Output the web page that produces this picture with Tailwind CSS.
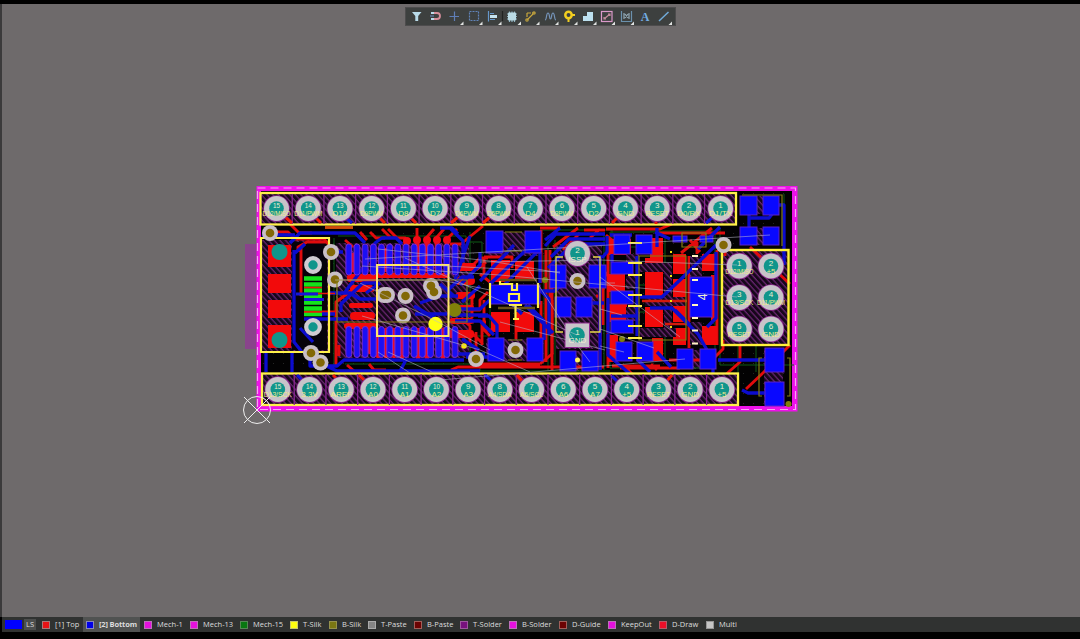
<!DOCTYPE html>
<html lang="en">
<head>
<meta charset="utf-8">
<title>PCB Editor</title>
<script src="https://cdn.jsdelivr.net/npm/@tailwindcss/browser@4"></script>
</head>
<body class="w-[1080px] h-[639px] overflow-hidden bg-black font-['Open_Sans','Noto_Sans',sans-serif]">
<div class="flex flex-col h-full">
<div class="h-1 shrink-0 bg-black"></div>
<main class="relative h-[613px] shrink-0 bg-[#6e6a6b] border-l-2 border-[#3b3a3b]">
<svg class="block -ml-0.5 w-[1080px] h-[613px]" viewBox="0 4 1080 613" fill="none">
<defs>
<pattern id="hatch" width="4.200" height="4.200" patternUnits="userSpaceOnUse" patternTransform="rotate(-42)"><rect width="5" height="5" fill="#16071a"/><path d="M1 0V5" stroke="#76297e" stroke-width="1.100"/></pattern>
<pattern id="dots" width="10" height="10" patternUnits="userSpaceOnUse"><rect x="3" y="3" width="1" height="1" fill="#252525"/></pattern>
<g id="via"><circle r="8" fill="#c8bfc6"/><circle r="4.300" fill="#826806"/></g>
<g id="pad"><circle r="13.300" fill="#8d288e"/><circle r="12.500" fill="#c8c4c9"/><circle r="7.300" fill="#10958b"/></g>
<g id="pin"><rect x="-2.900" width="5.800" height="31" rx="2.900" fill="#1b10f4" stroke="#7a2ad0" stroke-width="1"/></g>
</defs>
<rect x="245" y="244" width="15" height="105" fill="#89448b"/>
<rect x="256.500" y="186" width="541" height="225.500" fill="#ed12e8"/>
<rect x="261" y="191" width="531" height="215" fill="#030203"/>
<rect x="261" y="191" width="531" height="215" fill="url(#dots)"/>
<rect x="257.500" y="188" width="538" height="221.500" stroke="#f7a6f2" stroke-width="1.200" stroke-dasharray="8 5"/>

<!-- copper pour -->
<g fill="url(#hatch)">
<rect x="262" y="240" width="66" height="111"/><rect x="336" y="243" width="133" height="115"/><rect x="488" y="232" width="54" height="24"/><rect x="556" y="244" width="46" height="105"/><rect x="486" y="339" width="56" height="22"/><rect x="722" y="250" width="67" height="95"/><rect x="764" y="348" width="19" height="57"/><rect x="749" y="196" width="22" height="18"/><rect x="749" y="228" width="22" height="17"/><rect x="677" y="350" width="39" height="19"/><rect x="560" y="351" width="38" height="20"/>
</g>
<rect x="292" y="242" width="35" height="108" fill="#06020a"/>

<!-- green outlines -->
<g stroke="#0f5a16" stroke-width="1">
<path d="M338 236H466V242H482V270M470 232V336H488M540 230H612V247H650M555 240V365M604 232V370M720 228V365H794M738 345V373M784 194V248M345 364H480V371H610M650 231H718M456 246V280M334 238V366M490 275V330M544 255V340M610 232H715V368H610ZM458 304H470V360M548 235V370M756 346V372M757 202V210M607 285H645M607 312H645M665 235V360"/>
</g>

<!-- top layer traces -->
<g stroke="#e00b0d" stroke-width="2.900" stroke-linejoin="round">
<path d="M274 232H288L295 239H324L331 247M290 224L299 233H312M345 240L353 247M382 229L390 237M370 232L376 238H385M388 229L397 238H405V246M417 228V245M434 229L427 237V245M444 229L437 237V245M457 229L447 239V246M483 226L461 244H450M360 232L367 240"/>
<path d="M325 227.500H353" stroke="#d04c0c"/>
<path d="M298 252V247L307 242H326M301 245V296M304 312H336M336 366V302L352 290H374M347 365L354 371M369 364L374 370H386M339 345V356"/>
<path d="M455 266H472L480 258H488M476 270L486 262M480 274L490 282M466 310H480V300L488 292M458 335H474L482 343M450 320L463 320L470 326V345M540 364L552 354V300M480 364H540M451 370L458 367H604M484 258V278M516 318V339M484 330L490 336M486 322H482V345M484 257H512V268M484 300V330H491M472 296V318M476 332V352"/>
<path d="M541 230V283M541 301V350M546 250V362M550 250V300M555 283L552 286V370M553 247L578 228M563 250L580 233M604 288L600 293V370M596 296H603M606 229H660L672 224M608 272L603 278V325M608 238V368M606 235L612 240M540 228H560M584 230H605M590 238L600 229"/>
<path d="M681 253L712 228M690 240L700 252M659 233H725M697 242V254M669 360H712L723 349V340M750 247L790 284M790 345L775 360M746 389L766 370M740 345V362L715 384M660 366H612M620 368H680M626 368L632 374M651 364L657 370M725 256V240M689 256V348M717 250V345"/>
</g>
<g fill="#f20a0b">
<rect x="268" y="245" width="23" height="22"/><rect x="268" y="274" width="23" height="19"/><rect x="268" y="300" width="23" height="18"/><rect x="268" y="325" width="23" height="23"/>
<rect x="491" y="260" width="19" height="22"/><rect x="515" y="261" width="19" height="20"/><rect x="491" y="312" width="19" height="20"/><rect x="515" y="312" width="19" height="20"/>
<rect x="609" y="239" width="22" height="16"/><rect x="650" y="238" width="13" height="20"/><rect x="607" y="274" width="18" height="18"/><rect x="607" y="304" width="20" height="18"/><rect x="608" y="335" width="10" height="27"/><rect x="645" y="258" width="18" height="38"/><rect x="645" y="307" width="18" height="20"/><rect x="652" y="338" width="11" height="23"/><rect x="673" y="254" width="13" height="20"/><rect x="673" y="279" width="13" height="19"/><rect x="673" y="303" width="13" height="19"/><rect x="673" y="328" width="13" height="17"/><rect x="702" y="254" width="15" height="17"/><rect x="702" y="326" width="15" height="19"/><rect x="711" y="275" width="6" height="46"/>
<rect x="347" y="274" width="30" height="8" rx="3"/><rect x="350" y="285" width="23" height="7" rx="3"/><rect x="349" y="303" width="24" height="5" rx="2"/><rect x="350" y="312" width="25" height="8" rx="4"/><rect x="344" y="323" width="33" height="6" rx="3"/><rect x="452" y="263" width="24" height="8" rx="3"/><rect x="455" y="277" width="20" height="8" rx="4"/><rect x="456" y="292" width="19" height="7" rx="3"/><rect x="456" y="305" width="18" height="6" rx="3"/><rect x="450" y="318" width="24" height="6" rx="3"/><rect x="448" y="330" width="26" height="8" rx="3"/><rect x="377" y="273" width="72" height="5"/>
</g>
<g fill="url(#hatch)"><rect x="626" y="254" width="13" height="9"/><rect x="626" y="276" width="13" height="13"/><rect x="626" y="307" width="14" height="14"/><rect x="636" y="263" width="36" height="9"/><rect x="664" y="272" width="8" height="65"/><rect x="645" y="297" width="41" height="9"/><rect x="639" y="328" width="37" height="9"/><rect x="690" y="322" width="12" height="23"/><rect x="690" y="256" width="12" height="20"/></g>
<path d="M642 301H687M665 324H689" stroke="#d51a0c" stroke-width="2.500"/>
<g fill="#f20a15"><circle cx="407" cy="241" r="4"/><circle cx="417" cy="240" r="4"/><circle cx="427" cy="240" r="4"/><circle cx="437" cy="240" r="4"/><circle cx="447" cy="240" r="4"/></g>
<g stroke="#e90c24" stroke-width="4.500" stroke-linecap="round"><path d="M407 245V268M417 243V270M427 243V270M437 243V270M447 243V270M353 255V270M386 250V270M378 330V356M386 330V356M394 330V356M402 330V358M418 330V358M427 330V358M443 330V358M370 330V352"/></g>

<!-- bottom layer traces -->
<g stroke="#0c0ccf" stroke-width="3.300" stroke-linejoin="round">
<path d="M262 235H295M290 243L300 233H355L365 243M375 247V243L382 238H396L402 244M294 250V342L302 352M295 253L305 244M266 352V372M292 352V372M304 314H335M304 319H348M300 328L313 342M310 355V366H337L344 360H464M320 363L337 371H480M407 358L399 373M331 252H343"/>
<path d="M330 293H350L360 299H376M341 312V304L363 283H378M366 293L380 283M372 256L345 292M438 320L414 306M420 303L440 296H458M440 284L454 296M448 290L462 277H474M452 309H480L493 297M455 321H480L494 335M458 354H485M462 339L479 350M450 228L463 241V262M440 228H452L458 234M470 236L455 280M480 286L462 302M460 285L480 265V252M415 314H447M450 315H488M466 357H488"/>
<path d="M480 281L514 245M490 284L525 251M503 286L538 251M478 316H489L497 325V340M512 304L522 314M528 305L544 321V340M537 287L549 299V335M525 305L553 333M538 291H555L563 283M545 246L556 234H605M551 257L569 239H605M548 268L573 244H605M560 228L545 240M607 236V252L602 258M600 255V370M604 303H592M540 252V283"/>
<path d="M610 235H632M608 298V332H612M608 334V355L630 374M611 316H640M655 232L670 239M657 228V247M640 297H662L680 280L716 245M650 308H672L698 334L707 350M716 252L716 318L707 327M657 352L671 367M713 374V368L703 360M718 360H766M742 390L748 393H765M749 212V230M749 218H769L773 213M779 205H784V265M720 227L698 249M637 359L650 372M675 310L690 325M637 256V336M612 254V262"/>
</g>
<g id="pins"></g>
<g fill="#0908ff" stroke="#5c22c5" stroke-width="1">
<rect x="740" y="196" width="17" height="19"/><rect x="763" y="196" width="16" height="19"/><rect x="740" y="227" width="17" height="18"/><rect x="763" y="227" width="16" height="18"/>
<rect x="486" y="231" width="17" height="22"/><rect x="525" y="231" width="16" height="22"/><rect x="550" y="265" width="16" height="23"/><rect x="589" y="265" width="17" height="23"/><rect x="555" y="297" width="16" height="20"/><rect x="576" y="297" width="16" height="20"/><rect x="488" y="338" width="16" height="23"/><rect x="527" y="338" width="16" height="23"/><rect x="560" y="351" width="16" height="20"/><rect x="582" y="351" width="16" height="20"/>
<rect x="614" y="235" width="16" height="19"/><rect x="636" y="235" width="16" height="19"/><rect x="611" y="262" width="22" height="12"/><rect x="611" y="291" width="22" height="13"/><rect x="611" y="320" width="22" height="13"/><rect x="616" y="342" width="16" height="19"/><rect x="637" y="342" width="16" height="19"/>
<rect x="673" y="236" width="14" height="6"/><rect x="700" y="236" width="13" height="6"/><rect x="690" y="277" width="22" height="40"/><rect x="677" y="349" width="16" height="20"/><rect x="700" y="349" width="16" height="20"/><rect x="765" y="348" width="19" height="24"/><rect x="765" y="382" width="19" height="24"/><rect x="490" y="285" width="50" height="19"/>
</g>
<g stroke-width="4.500"><path d="M304 278.500H322M304 284.500H322M304 290.500H322M304 296.500H322M304 302.500H322M304 308.500H322M304 314H322" stroke="#14e31b"/><path d="M304 287.500H322M312 293.500H335M304 312H322" stroke="#ed1606" stroke-width="1.300"/><path d="M296 294H318M304 299.500H324" stroke="#1616da" stroke-width="3"/></g>

<!-- header strips -->
<g fill="url(#hatch)" stroke="#fff04a" stroke-width="2.300"><rect x="260.500" y="193" width="475.500" height="31.500"/><rect x="262" y="373.500" width="476" height="31.500"/></g>
<g id="cells" stroke="#8a2692" stroke-width="1.300"></g>
<g stroke="#ed190c" stroke-width="3"><path d="M285 217L292 223M315 217L321 223M379 217L385 223M410 217L416 223M458 217L451 223M490 217L483 223M618 217L612 223M656 220V224M333 375L339 381M359 375L365 381M517 375L523 382M672 375L666 382"/></g>
<g stroke="#1515d5" stroke-width="3"><path d="M345 217L352 223M297 375L303 381M485 375L493 382M612 376L618 382M713 217L706 223"/></g>
<rect x="722" y="250" width="66.500" height="95" stroke="#fff13a" stroke-width="2.400"/>
<path d="M261 238H329V352H261Z" stroke="#fff04a" stroke-width="2.200"/>

<g id="pads"></g>
<g fill="#10958b"><circle cx="279.500" cy="252" r="8"/><circle cx="279.500" cy="340" r="8"/></g>
<g fill="#10958b" stroke="#d0cbd1" stroke-width="4.200"><circle cx="313" cy="265" r="6.800"/><circle cx="313" cy="327" r="6.800"/></g>
<use href="#pad" x="577.500" y="253.500"/>
<rect x="565" y="323" width="24.500" height="24.500" fill="#c8c4c9" stroke="#8d288e"/><circle cx="577" cy="335" r="7.800" fill="#10958b"/>
<use href="#via" x="270" y="233"/><use href="#via" x="331" y="252"/><use href="#via" x="335" y="279.500"/><use href="#via" x="311" y="353"/><use href="#via" x="320.500" y="362.500"/><use href="#via" x="384" y="295"/><use href="#via" x="387" y="295"/><use href="#via" x="405.500" y="296"/><use href="#via" x="403" y="315.500"/>
<use href="#via" x="431" y="286"/><use href="#via" x="434" y="292"/><circle cx="384" cy="295" r="4.300" fill="#826806"/><circle cx="431" cy="286" r="4.300" fill="#826806"/>
<use href="#via" x="577.500" y="281"/><use href="#via" x="515.500" y="350"/><use href="#via" x="476" y="359"/><use href="#via" x="723.500" y="245"/>

<!-- silkscreen -->
<g stroke="#857e12" stroke-width="1.200"><path d="M337 280V322H467V280H337M505 232H522M505 251H522M639 256H686V340H639ZM682 233H706V247H682ZM762 358H759V396H762M787 358H790V396H787M508 340H522M508 360H522M742 195H782V246"/><path d="M500 280H537M498 308H535" stroke="#685018" stroke-width="2.500"/></g>
<circle cx="454.500" cy="310" r="7" fill="#81800a"/><circle cx="545" cy="280" r="3" fill="#81800a"/><circle cx="622" cy="339" r="3" fill="#81800a"/><circle cx="788.500" cy="404" r="3" fill="#81800a"/>
<path d="M377 265H448.500V336H377Z" stroke="#ffe66b" stroke-width="2"/>
<path d="M563 257H556V332H563M593 257H600V332H590" stroke="#e7d94b" stroke-width="1.300"/>
<g stroke="#ffee4a" stroke-width="2.200"><path d="M490 283V308M538 283V308M628 243H642M628 263H642M628 275H642M628 295H642M628 306H642M628 326H642M628 338H642M628 358H642"/><path d="M500 281V284H512V290H517V283M509 294V301H519V294ZM509 305H522M515.500 304V318M513 319H519"/></g>
<g stroke="#fff3c1" stroke-width="2"><path d="M692 256H698M692 269H698M692 280H698M692 305H698M692 318H698M692 330.500H698M692 343.500H698"/></g>
<circle cx="435.500" cy="324" r="7.200" fill="#ffff13"/><circle cx="464" cy="346" r="2.800" fill="#f5e50b"/><circle cx="577.500" cy="360" r="2.500" fill="#fff25e"/>
<g fill="#f1e60b"><rect x="670" y="251" width="2" height="2"/><rect x="670" y="275" width="2" height="2"/><rect x="670" y="300" width="2" height="2"/><rect x="670" y="326" width="2" height="2"/></g>

<!-- unrouted connections -->
<g stroke="#bcb9ce" stroke-width=".65" opacity=".85"><path d="M378 249L490 261L560 273M365 259L560 248L770 235M362 266L500 275L737 297M405 258L577 335M335 280H440L490 290M360 283L440 323L490 350M362 316L480 350L530 372M378 352L410 373M388 352L432 372H470M440 380L685 359M408 264L560 272M480 262L600 260L737 265M500 322L605 350M527 267L577 345L590 362M600 277L680 337M600 309L622 315M600 329L654 348M600 346L624 352M600 283H615"/></g>

<!-- designators -->
<g font-family="Liberation Sans, sans-serif" text-anchor="middle" fill="#eeeed0" font-size="8"><g id="labels"></g>
<text x="577.500" y="253">2</text><text x="577.500" y="262">ISSP</text><text x="577.500" y="335">1</text><text x="577.500" y="343">GND</text>
<text transform="translate(707 297) rotate(-90)" font-size="12">4</text></g>

<g stroke="#eeeeee" stroke-width="1"><circle cx="257" cy="410" r="13.500"/><path d="M244 397L270 423M270 397L244 423"/></g>
</svg>

<div class="absolute left-[403px] top-[3px] w-[271px] h-[19px] bg-[#3d403f] border border-[#4d4c4d]">
<svg class="block -ml-px -mt-px w-[271px] h-[19px]" viewBox="405 7 271 19" fill="none" stroke-width="1.200">
<path d="M412 12H421.500L418.200 16V21H415.300V16Z" fill="#b9dbea"/>
<path d="M434 13H437A3 3 0 0 1 437 19H434" stroke="#d68e9b" stroke-width="1.800"/><path d="M431 13H434M431 19H434" stroke="#b9dbea" stroke-width="2"/><path d="M430 16H434" stroke="#6581ac"/>
<path d="M454.500 11.500V21M449.500 16.500H459" stroke="#5f7eb7"/>
<rect x="469.500" y="11.500" width="9" height="9" stroke="#6183b9" stroke-dasharray="2 1"/>
<path d="M488.500 11V21.500M490 13.500H494M490 19.500H495" stroke="#6597ca"/><path d="M490 16.500H497" stroke="#c6e3ef" stroke-width="3"/>
<path d="M502.500 11V21" stroke="#202322"/>
<path d="M507 14H517M507 16.500H517M507 19H517M509.500 11.500V22M512 11.500V22M514.500 11.500V22" stroke="#8eb3c2"/><rect x="508" y="12.500" width="8" height="8" rx="1" fill="#bbdce6"/>
<path d="M527 20L533 14M527 13H531M532 13H535M527 17V13" stroke="#c9a83c"/><circle cx="527" cy="20" r="1.200" stroke="#bfa13e"/><circle cx="534" cy="13" r="1.200" stroke="#bfa13e"/>
<path d="M545 20C547 20 546 13 548 13C550 13 549 19 550.500 19C552 19 551 13 553 13C555 13 554 20 556 20" stroke="#7594b9"/>
<circle cx="568.500" cy="15" r="3.200" stroke="#f2ce20" stroke-width="2.500"/><path d="M568.500 18V22M571 15H575" stroke="#f2ce20" stroke-width="2"/>
<path d="M583 21V16H587V12H593V21Z" fill="#bde1f0"/>
<rect x="601.500" y="11.500" width="10.500" height="10" stroke="#db9aca"/><path d="M604 19L610 14M604 17V19H606M608 14H610V16" stroke="#c48c9d"/>
<path d="M621.500 11V21.500H631.500V11" stroke="#6b91ad"/><path d="M624 13V19M629 13V19M625 18L628 14M625 14L628 18" stroke="#91a8b5"/>
<text x="645" y="20.500" font-family="Liberation Serif, serif" font-weight="bold" font-size="12" text-anchor="middle" fill="#73aee3">A</text>
<path d="M659 21L668.500 12" stroke="#71abda" stroke-width="1.500"/>
<g fill="#e2e4e3"><path id="corner" d="M463.500 21.500V25H460Z"/><use href="#corner" x="19"/><use href="#corner" x="38"/><use href="#corner" x="57.500"/><use href="#corner" x="76"/><use href="#corner" x="95"/><use href="#corner" x="114"/><use href="#corner" x="133"/><use href="#corner" x="151.500"/><use href="#corner" x="170.500"/><use href="#corner" x="208.500"/></g>
</svg>
</div>
</main>

<footer class="ml-0.5 h-[15px] shrink-0 flex bg-[#303231] text-[7.5px] leading-[15px] text-[#dddddd] whitespace-nowrap">
<div class="w-[37px] flex items-center pl-[3px]"><i class="w-[17px] h-[9px] bg-[#0000ff]"></i><span class="ml-0.5 px-0.5 h-[11px] leading-[11px] bg-[#4c4e4d]">LS</span></div>
<div class="w-11 flex items-center pl-[3px]"><i class="size-[8px] bg-[#e81315] border border-[#aa7777]"></i><span class="ml-[5px]">[1] Top</span></div>
<div class="w-[57px] flex items-center pl-[3px] bg-[#505251] font-bold"><i class="size-[8px] bg-[#0000e8] border border-[#8788bb]"></i><span class="ml-[5px] tracking-[-0.15px]">[2] Bottom</span></div>
<div class="w-[46px] flex items-center pl-1"><i class="size-[8px] bg-[#e510de] border border-[#bd70ba]"></i><span class="ml-[5px]">Mech-1</span></div>
<div class="w-[50px] flex items-center pl-1"><i class="size-[8px] bg-[#e510de] border border-[#bd70ba]"></i><span class="ml-[5px]">Mech-13</span></div>
<div class="w-[50px] flex items-center pl-1"><i class="size-[8px] bg-[#087811] border border-[#558755]"></i><span class="ml-[5px]">Mech-15</span></div>
<div class="w-[39px] flex items-center pl-1"><i class="size-[8px] bg-[#ffff10] border border-[#c9c968]"></i><span class="ml-[5px]">T-Silk</span></div>
<div class="w-[39px] flex items-center pl-1"><i class="size-[8px] bg-[#7b7713] border border-[#96914c]"></i><span class="ml-[5px]">B-Silk</span></div>
<div class="w-[46px] flex items-center pl-1"><i class="size-[8px] bg-[#858585] border border-[#aaaaaa]"></i><span class="ml-[5px]">T-Paste</span></div>
<div class="w-[46px] flex items-center pl-1"><i class="size-[8px] bg-[#6d0303] border border-[#a15e59]"></i><span class="ml-[5px]">B-Paste</span></div>
<div class="w-[49px] flex items-center pl-1"><i class="size-[8px] bg-[#77117d] border border-[#9d579e]"></i><span class="ml-[5px]">T-Solder</span></div>
<div class="w-[50px] flex items-center pl-1"><i class="size-[8px] bg-[#e510de] border border-[#bd70ba]"></i><span class="ml-[5px]">B-Solder</span></div>
<div class="w-[49px] flex items-center pl-1"><i class="size-[8px] bg-[#6d0303] border border-[#a15e59]"></i><span class="ml-[5px]">D-Guide</span></div>
<div class="w-[51px] flex items-center pl-1"><i class="size-[8px] bg-[#e510de] border border-[#bd70ba]"></i><span class="ml-[5px]">KeepOut</span></div>
<div class="w-[47px] flex items-center pl-1"><i class="size-[8px] bg-[#ec1029] border border-[#b65b68]"></i><span class="ml-[5px]">D-Draw</span></div>
<div class="w-10 flex items-center pl-1"><i class="size-[8px] bg-[#c5c5c5] border border-[#969696]"></i><span class="ml-[5px]">Multi</span></div>
</footer>
</div>
<script>
const topNames=["D12/MISO","D11/PWM","D10","D9PWM","D8","D7","D6PWM","D5PWM","D4","D3PWM","D2","GND","RESET","D0/RX","D1/TX"];
const bottomNames=["D13/SCK","3.3V","AREF","A0","A1","A2","A3","A4/SDA","A5/SCL","A6","A7","+5","RESET","GND","+5"];
let pads="",labels="",cells="",pins="";
function addPad(x,y,n,name){
  const fit=name.length>4?`textLength="${name.length>6?28:23}" lengthAdjust="spacingAndGlyphs"`:"";
  const numFit=n>9?`textLength="7" lengthAdjust="spacingAndGlyphs"`:"";
  pads+=`<use href="#pad" x="${x}" y="${y}"/>`;
  labels+=`<text x="${x}" y="${y-0.5}" ${numFit}>${n}</text><text x="${x}" y="${y+7.5}" fill="#f0eb8c" font-size="8" ${fit}>${name}</text>`;
}
for(let i=0;i<15;i++){
  addPad(276.5+i*31.72,208.5,15-i,topNames[i]);
  addPad(277.8+i*31.72,389.5,15-i,bottomNames[i]);
  if(i) cells+=`<path d="M${260.5+i*31.72} 194V224M${262.5+i*31.72} 374V405"/>`;
}
for(let i=0;i<14;i++) pins+=`<use href="#pin" x="${348.8+i*8.17}" y="244"/><use href="#pin" x="${348.8+i*8.17}" y="326.500"/>`;
[["D12/MISO","+5"],["D13/SCK","D11/PWM"],["RESET","GND"]].forEach((r,j)=>r.forEach((n,i)=>addPad(739.3+i*31.7,266+j*31.5,1+j*2+i,n)));
document.getElementById("pads").innerHTML=pads;
document.getElementById("labels").innerHTML=labels;
document.getElementById("cells").innerHTML=cells;
document.getElementById("pins").innerHTML=pins;
</script>
</body>
</html>
